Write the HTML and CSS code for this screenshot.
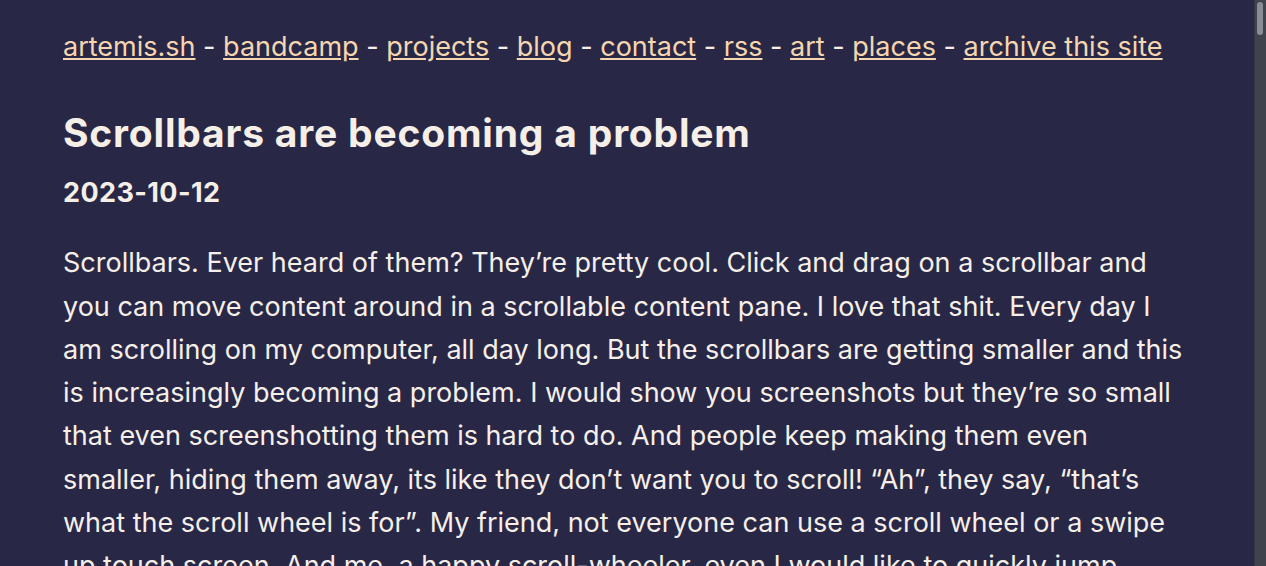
FILE: index.html
```html
<!DOCTYPE html>
<html lang="en">
<head>
    <meta charset="utf-8">
    <title>Scrollbars are becoming a problem</title>
    <link rel="stylesheet" href="styles.css">
</head>
<body>
    <div class="viewport">
        <main class="page">
            <nav class="nav">
                <a href="#">artemis.sh</a> - <a href="#">bandcamp</a> - <a href="#">projects</a> - <a href="#">blog</a> - <a href="#">contact</a> - <a href="#">rss</a> - <a href="#">art</a> - <a href="#">places</a> - <a href="#">archive this site</a>
            </nav>

            <article class="post">
                <h1 class="post-title">Scrollbars are becoming a problem</h1>
                <h2 class="post-date">2023-10-12</h2>

                <p>Scrollbars. Ever heard of them? They’re pretty cool. Click and drag on a scrollbar and you can move content around in a scrollable content pane. I love that shit. Every day I am scrolling on my computer, all day long. But the scrollbars are getting smaller and this is increasingly becoming a problem. I would show you screenshots but they’re so small that even screenshotting them is hard to do. And people keep making them even smaller, hiding them away, its like they don’t want you to scroll! “Ah”, they say, “that’s what the scroll wheel is for”. My friend, not everyone can use a scroll wheel or a swipe up touch screen. And me, a happy scroll-wheeler, even I would like to quickly jump somewhere in the middle of a long document sometimes, and the scrollbar is how you do that.</p>

                <p>It used to be that a scrollbar was a big chunky thing with arrows on both ends and a thumb you could actually grab. Now it is a thin grey line that fades out when you stop moving the mouse.</p>
            </article>
        </main>
    </div>

    <!-- the window's scrollbar -->
    <div class="scrollbar">
        <div class="scrollbar-thumb"></div>
    </div>
</body>
</html>
```

FILE: styles.css
```css
* {
    font-family: Inter, "Noto Sans", sans-serif;
}

body {
    margin: 0;
    height: 100vh;
    overflow: hidden;
    display: flex;
    background: #282846;
    color: #f6efe8;
    font-size: 27px;
    line-height: 43.3px;
}

.viewport {
    flex: 1;
    min-width: 0;
    overflow: hidden;
}

.scrollbar {
    width: 12px;
    flex-shrink: 0;
    box-sizing: border-box;
    padding: 2px 3px 0 2px;
    background: #40434b;
    border-left: 1px solid #363849;
}
.scrollbar-thumb {
    height: 33px;
    border-radius: 4px;
    background: #8b8d96;
}

.page {
    max-width: 1128px;
    margin: 0 auto;
    padding-top: 25px;
}

.nav a {
    color: #f5d6b0;
}

.post-title {
    margin: 43px 0 0;
    font-size: 39px;
    line-height: 43px;
    font-weight: 700;
    letter-spacing: 0.8px;
}
.post-date {
    margin: 23px 0 0;
    font-size: 27px;
    line-height: 31px;
    font-weight: 700;
    letter-spacing: 0.4px;
}

.post p {
    margin: 33px 0 0;
}
```
